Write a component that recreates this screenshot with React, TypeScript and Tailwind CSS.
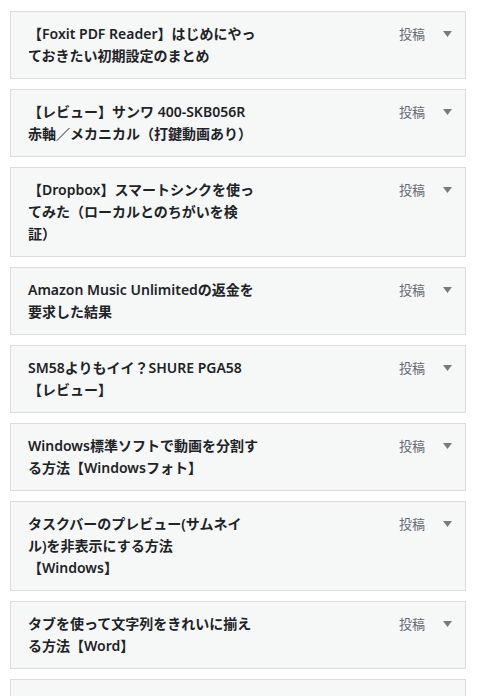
import React from "react";

interface MenuItem {
  id: number;
  lines: string[];
}

const items: MenuItem[] = [
  { id: 1, lines: ["【Foxit PDF Reader】はじめにやっ", "ておきたい初期設定のまとめ"] },
  { id: 2, lines: ["【レビュー】サンワ 400-SKB056R", "赤軸／メカニカル（打鍵動画あり）"] },
  { id: 3, lines: ["【Dropbox】スマートシンクを使っ", "てみた（ローカルとのちがいを検", "証）"] },
  { id: 4, lines: ["Amazon Music Unlimitedの返金を", "要求した結果"] },
  { id: 5, lines: ["SM58よりもイイ？SHURE PGA58", "【レビュー】"] },
  { id: 6, lines: ["Windows標準ソフトで動画を分割す", "る方法【Windowsフォト】"] },
  { id: 7, lines: ["タスクバーのプレビュー(サムネイ", "ル)を非表示にする方法", "【Windows】"] },
  { id: 8, lines: ["タブを使って文字列をきれいに揃え", "る方法【Word】"] },
  { id: 9, lines: [] },
];

const MenuItemHandle: React.FC<{ item: MenuItem }> = ({ item }) => (
  <div className="flex items-start justify-between border border-[#dcdcde] bg-[#f6f7f7] py-[11px] pl-[17px] pr-[13px] shrink-0 min-h-[68px]">
    <div className="text-[14px] font-semibold leading-[22px] text-[#1d2327]">
      {item.lines.map((line, i) => (
        <div key={i} className="whitespace-nowrap">
          {line}
        </div>
      ))}
    </div>
    {item.lines.length > 0 && (
      <div className="flex items-center h-[22px]">
        <span className="text-[13px] text-[#646970] leading-[22px]">投稿</span>
        <svg width="9" height="6" viewBox="0 0 9 6" className="ml-[18px] mt-[-1px]">
          <polygon points="0,0 9,0 4.5,6" fill="#787c82" />
        </svg>
      </div>
    )}
  </div>
);

export default function App() {
  return (
    <div
      className="w-[481px] h-[696px] overflow-hidden bg-white pt-[11px] pl-[10px] pr-[15px] flex flex-col gap-[10px]"
      style={{ fontFamily: '"Noto Sans", "Noto Sans CJK JP", sans-serif' }}
    >
      {items.map((item) => (
        <MenuItemHandle key={item.id} item={item} />
      ))}
    </div>
  );
}
